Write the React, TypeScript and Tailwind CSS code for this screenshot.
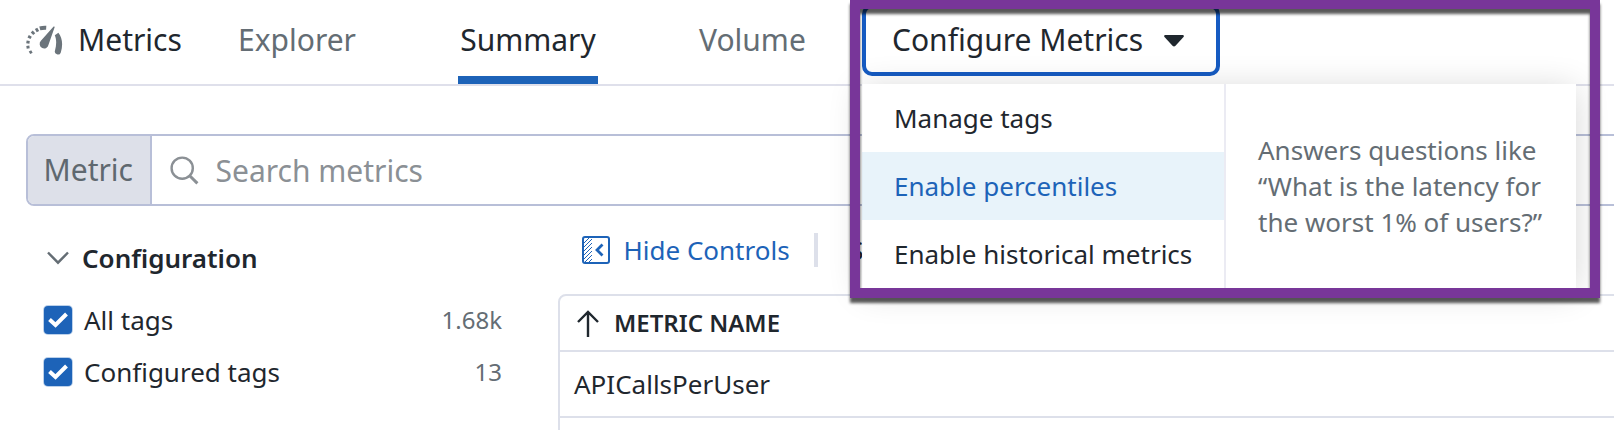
import React from "react";

const checks = [
  { label: "All tags", count: "1.68k" },
  { label: "Configured tags", count: "13" },
];

function GaugeIcon() {
  return (
    <svg className="h-[30px] w-[38px] shrink-0" viewBox="0 0 38 30" fill="none">
      <g stroke="#6b747b">
        <path d="M5.4 28.4L4 25.8" strokeWidth="2.8" />
        <path d="M2.2 23.4L1.8 20.8" strokeWidth="3" />
        <path d="M1.8 18.4L2.2 15.8" strokeWidth="3.2" />
        <path d="M3 13.3L4.3 10.9" strokeWidth="3.4" />
        <path d="M6 8.8L8 6.9" strokeWidth="3.6" />
        <path d="M9.8 5.6L12.2 4.3" strokeWidth="3.8" />
        <path d="M13.8 3.4Q17 2.5 20.2 2.7" strokeWidth="4" />
      </g>
      <path d="M28.8 10.2L32.4 7.8C36.3 12.5 37.2 20 34.8 27.4A3 3 0 0 1 29 25.5C30.4 20.5 30.8 15 28.8 10.2Z" fill="#6b747b" />
      <path d="M27.6 1.4L14.9 15.8A4.5 4.5 0 1 0 22.6 19.6L28.8 1.8Z" fill="#6b747b" />
    </svg>
  );
}

function Header() {
  return (
    <header className="flex h-[86px] shrink-0 border-b-2 border-[#dfe0eb] pl-[26px] text-[30px] leading-[79px]">
      <div className="flex w-[212px] text-[#1f272e]">
        <div className="mt-[25px] mr-[14px]"><GaugeIcon /></div>
        <span>Metrics</span>
      </div>
      <span className="w-[220px] text-[#646d74]">Explorer</span>
      <span className="h-[84px] w-[140px] border-b-8 border-[#1d63b8] text-center text-[#1f272e]">Summary</span>
      <span className="ml-[101px] text-[#646d74]">Volume</span>
    </header>
  );
}

function Search() {
  return (
    <div className="mt-12 ml-[26px] flex h-[72px] w-[1640px] shrink-0 overflow-hidden rounded-lg border-2 border-[#b8bfd8] text-[30px]">
      <div className="w-[124px] border-r-2 border-[#b8bfd8] bg-[#dde0e9] pl-[15.5px] leading-[67px] text-[#5f686f]">Metric</div>
      <svg className="mt-[20px] ml-[18px] h-[30px] w-[30px]" viewBox="0 0 30 30" fill="none" stroke="#8b9095" strokeWidth="2.4">
        <circle cx="12.2" cy="12.2" r="10.6" />
        <path d="M19.7 19.7L27.4 27.4" strokeWidth="3" />
      </svg>
      <span className="ml-[15.5px] leading-[69px] text-[#8b9095]">Search metrics</span>
    </div>
  );
}

function Sidebar() {
  return (
    <aside className="w-[558px] shrink-0 pr-[56px] pl-[44px] text-[26px] text-[#1f272e]">
      <div className="mt-[26px] flex h-[52px] items-center">
        <svg className="mr-[13px] ml-[3px] h-[14px] w-[22px]" viewBox="0 0 22 14" fill="none" stroke="#646d74" strokeWidth="2.4">
          <path d="M1 1.5L11 11.7L21 1.5" />
        </svg>
        <span className="font-semibold">Configuration</span>
      </div>
      <div className="mt-[10px]">
        {checks.map((c) => (
          <div key={c.label} className="flex h-[52px] items-center leading-[38px]">
            <span className="flex h-[28px] w-[28px] items-center justify-center rounded bg-[#1d63b8] shadow-[0_0_0_1px_#bcd1ea]">
              <svg className="h-[16px] w-[20px]" viewBox="0 0 20 16" fill="none" stroke="#fff" strokeWidth="4">
                <path d="M1.5 7.5L7.5 13L18.5 2" />
              </svg>
            </span>
            <span className="ml-[12px] flex-1">{c.label}</span>
            <span className="text-[24px] text-[#646d74]">{c.count}</span>
          </div>
        ))}
      </div>
    </aside>
  );
}

function Results() {
  return (
    <main className="w-[1100px] shrink-0 text-[26px] text-[#1f272e]">
      <div className="mt-[27px] flex h-[34px] items-center pl-6 leading-[34px]">
        <svg className="h-7 w-7" viewBox="0 0 28 28" fill="none" stroke="#1d63b8">
          <rect x="1" y="1" width="26" height="26" rx="2" strokeWidth="2" />
          <path d="M2 7L7 2M2 11L10 3M2 15L10 7M2 19L10 11M2 23L10 15M2 27L10 19M6 27L10 23" strokeWidth="1" />
          <path d="M20.5 8.5L15 14L20.5 19.5" strokeWidth="2.8" />
        </svg>
        <span className="ml-[13.5px] text-[#1d63b8]">Hide Controls</span>
        <span className="ml-[24.5px] h-[34px] w-1 bg-[#dde0ea]" />
        <span className="ml-[31px]">S</span>
      </div>
      <div className="mt-[27px] h-[160px] rounded-tl-lg border-2 border-[#dde0ea]">
        <div className="flex h-[56px] items-center border-b-2 border-[#dde0ea] pl-[17px] text-[24px] font-semibold">
          <svg className="mr-[15px] h-[27px] w-[22px]" viewBox="0 0 22 27" fill="none" stroke="#1f272e" strokeWidth="2.4">
            <path d="M11 27V2M1 12L11 2L21 12" />
          </svg>
          METRIC NAME
        </div>
        <div className="h-[66px] border-b-2 border-[#dde0ea] pl-[14px] leading-[65px]">APICallsPerUser</div>
      </div>
    </main>
  );
}

function ConfigureMenu() {
  return (
    <div className="absolute top-1 left-[862px] w-[714px]">
      <button className="flex h-[72px] w-[358px] items-center rounded-[10px] border-4 border-[#165bc2] pb-px pl-[26px] text-[30px] leading-[63px] text-[#1f272e]">
        Configure Metrics
        <svg className="mt-[3px] ml-[21px] h-[12px] w-[20px]" viewBox="0 0 20 12" fill="#1f272e">
          <path d="M1 0H19Q20.5 .5 19.5 2L11.5 10.8Q10 12 8.5 10.8L.5 2Q-.5 .5 1 0Z" />
        </svg>
      </button>
      <div className="mt-2 flex h-[204px] bg-white text-[26px] shadow-[0_4px_32px_rgba(0,0,0,0.16)]">
        <div className="w-[364px] border-r-2 border-[#ebebf3] leading-[68px] text-[#1f272e]">
          <div className="pl-8">Manage tags</div>
          <div className="bg-[#e8f3fa] pl-8 text-[#1d63b8]">Enable percentiles</div>
          <div className="pl-8">Enable historical metrics</div>
        </div>
        <p className="pt-[48px] pl-8 leading-9 whitespace-nowrap text-[#646d74]">
          Answers questions like<br />“What is the latency for<br />the worst 1% of users?”
        </p>
      </div>
    </div>
  );
}

export default function App() {
  return (
    <div className="relative flex h-[430px] w-[1614px] flex-col overflow-hidden bg-white font-['Noto_Sans',sans-serif]">
      <Header />
      <Search />
      <div className="flex">
        <Sidebar />
        <Results />
      </div>
      <ConfigureMenu />
      <div className="pointer-events-none absolute -top-px left-[850px] h-[299px] w-[750px] border-10 border-[#783699] drop-shadow-[0_5px_1.5px_rgba(0,0,0,0.65)]" />
    </div>
  );
}
